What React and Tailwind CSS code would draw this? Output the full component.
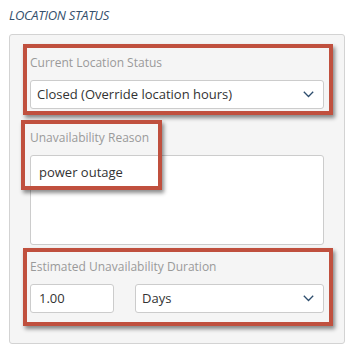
import React from "react";

function Chevron() {
  return (
    <svg width="11" height="7" viewBox="0 0 11 7" fill="none">
      <path d="M0.8 0.8 L5.5 5.5 L10.2 0.8" stroke="#2d4d6d" strokeWidth="1.3" />
    </svg>
  );
}

function RedBox({ className }) {
  return (
    <div
      className={`pointer-events-none absolute border-[4px] border-[#c0503e] shadow-[2px_3px_4px_rgba(0,0,0,0.45)] ${className}`}
    />
  );
}

export default function App() {
  return (
    <div
      className="relative h-[352px] w-[361px] bg-white"
      style={{ fontFamily: '"Open Sans", sans-serif' }}
    >
      <div className="px-[9px] pt-[7px]">
        <div className="text-[13px] italic leading-[16px] tracking-[-0.3px] text-[#34506d]">
          LOCATION STATUS
        </div>
        <div className="mt-[11px] h-[310px] w-[336px] rounded-[3px] border border-[#d3d3d3] bg-[#f5f5f5] px-[20px] pt-[20px]">
          <div className="text-[12px] leading-[16px] text-[#9a9a9a]">Current Location Status</div>
          <div className="mt-[9px] flex h-[29px] items-center justify-between rounded-[3px] border border-[#cccccc] bg-white pl-[6px] pr-[9px]">
            <span className="text-[13px] text-[#333]">Closed (Override location hours)</span>
            <Chevron />
          </div>
          <div className="mt-[21px] text-[12px] leading-[16px] text-[#9a9a9a]">Unavailability Reason</div>
          <div className="mt-[9px] h-[90px] rounded-[3px] border border-[#cccccc] bg-white px-[8px] pt-[6px] text-[13px] leading-[20px] text-[#333]">
            power outage
          </div>
          <div className="mt-[14px] text-[12px] leading-[16px] text-[#9a9a9a]">Estimated Unavailability Duration</div>
          <div className="mt-[9px] flex gap-[21px]">
            <div className="flex h-[29px] w-[84px] items-center rounded-[3px] border border-[#cccccc] bg-white pl-[8px] text-[13px] text-[#333]">
              1.00
            </div>
            <div className="flex h-[29px] flex-1 items-center justify-between rounded-[3px] border border-[#cccccc] bg-white pl-[6px] pr-[9px] text-[13px] text-[#333]">
              <span>Days</span>
              <Chevron />
            </div>
          </div>
        </div>
      </div>
      <RedBox className="left-[23px] top-[44px] h-[71px] w-[310px]" />
      <RedBox className="left-[21px] top-[120px] h-[70px] w-[141px]" />
      <RedBox className="left-[23px] top-[248px] h-[78px] w-[310px]" />
    </div>
  );
}
